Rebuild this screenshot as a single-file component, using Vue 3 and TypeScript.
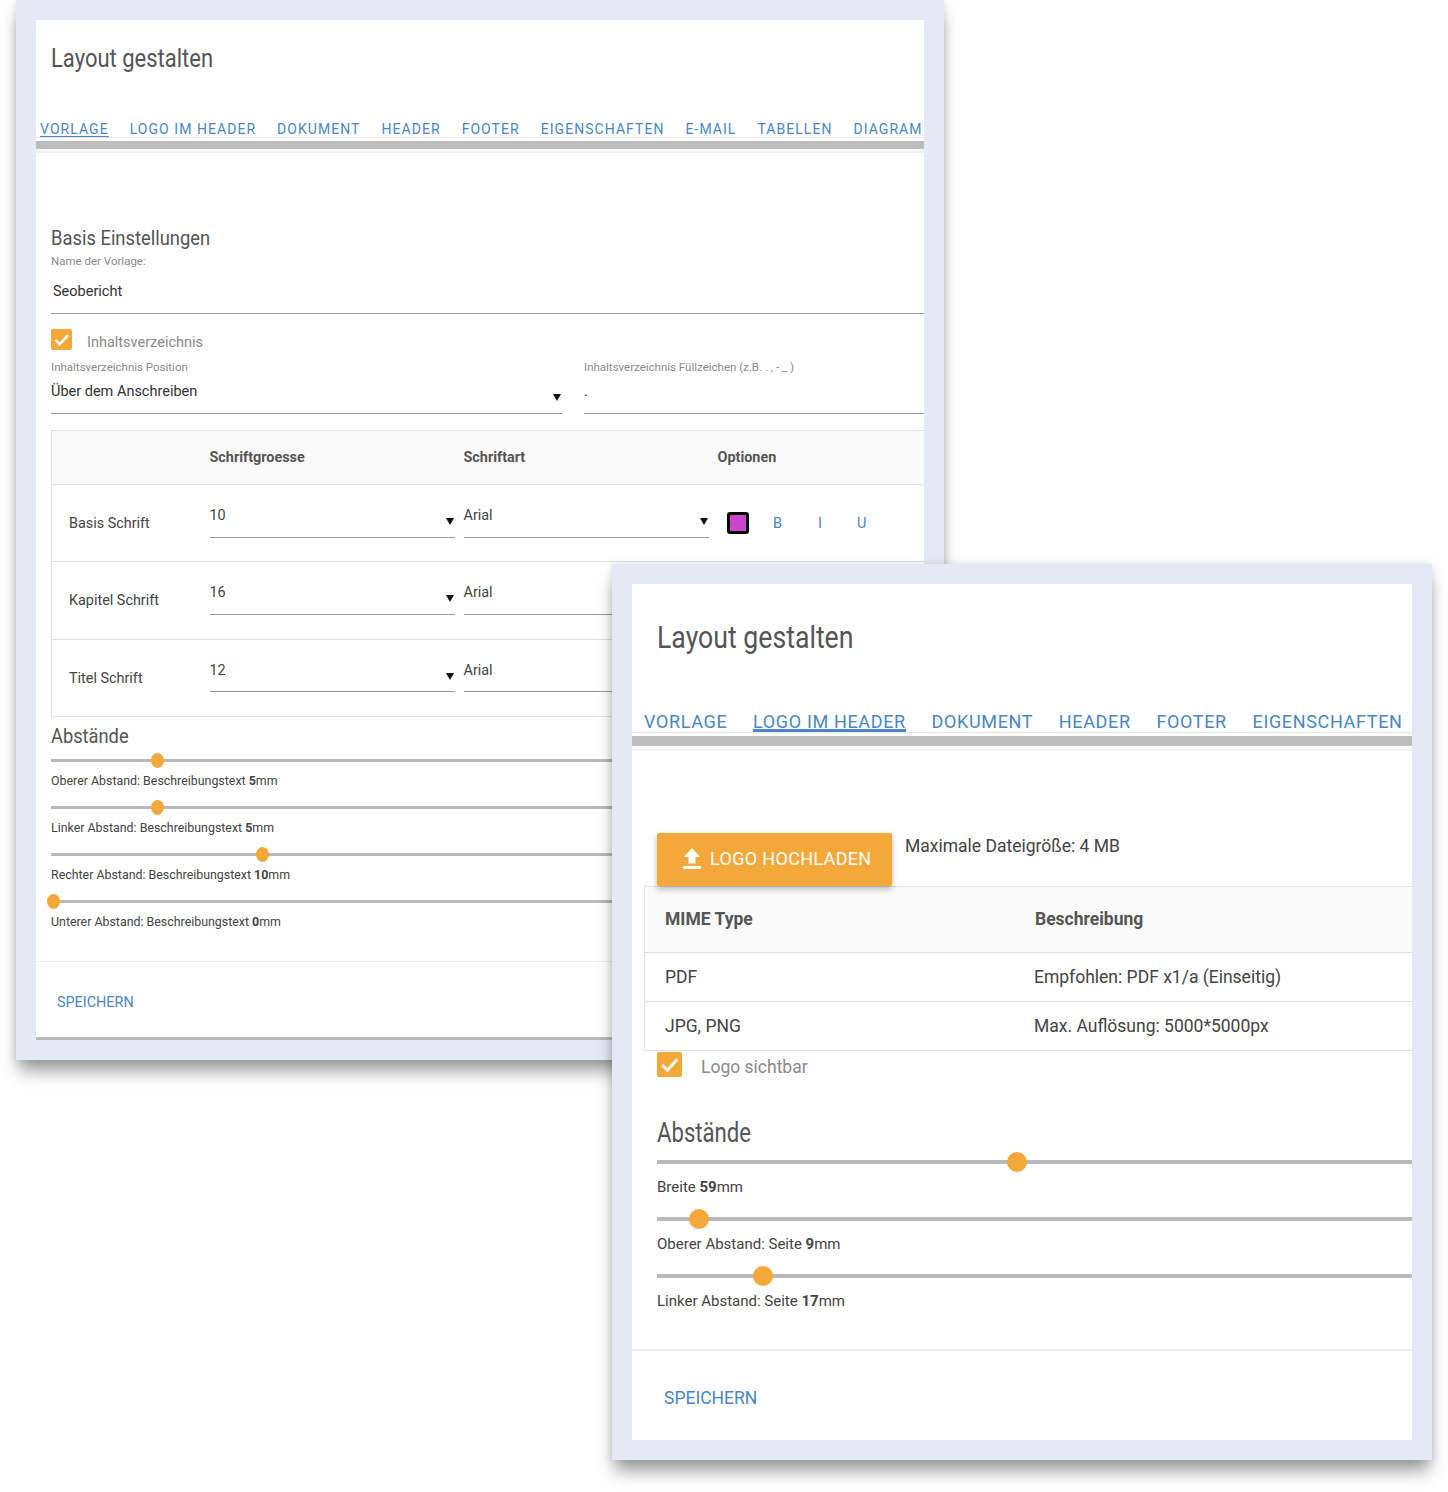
<script setup lang="ts">
interface SliderRow { text: string; value: string; unit: string; left: number }
interface FontRow { name: string; size: string; options: boolean }

const tabsA: string[] = ['VORLAGE', 'LOGO IM HEADER', 'DOKUMENT', 'HEADER', 'FOOTER', 'EIGENSCHAFTEN', 'E-MAIL', 'TABELLEN', 'DIAGRAM']
const tabsB: string[] = ['VORLAGE', 'LOGO IM HEADER', 'DOKUMENT', 'HEADER', 'FOOTER', 'EIGENSCHAFTEN']

const fontRows: FontRow[] = [
  { name: 'Basis Schrift', size: '10', options: true },
  { name: 'Kapitel Schrift', size: '16', options: false },
  { name: 'Titel Schrift', size: '12', options: false },
]

const slidersA: SliderRow[] = [
  { text: 'Oberer Abstand: Beschreibungstext ', value: '5', unit: 'mm', left: 107 },
  { text: 'Linker Abstand: Beschreibungstext ', value: '5', unit: 'mm', left: 107 },
  { text: 'Rechter Abstand: Beschreibungstext ', value: '10', unit: 'mm', left: 212 },
  { text: 'Unterer Abstand: Beschreibungstext ', value: '0', unit: 'mm', left: 3 },
]

const slidersB: SliderRow[] = [
  { text: 'Breite ', value: '59', unit: 'mm', left: 360 },
  { text: 'Oberer Abstand: Seite ', value: '9', unit: 'mm', left: 42 },
  { text: 'Linker Abstand: Seite ', value: '17', unit: 'mm', left: 106 },
]
</script>

<template>
  <div class="desk">
    <section class="window win-a">
      <div class="inner">
        <h1 class="title-a">Layout gestalten</h1>
        <nav class="tabs tabs-a">
          <span v-for="(t, i) in tabsA" :key="t" class="tab" :class="{ active: i === 0 }">{{ t }}</span>
        </nav>
        <div class="bar bar-a"></div>
        <div class="rule"></div>

        <div class="body-a">
          <h2 class="h-basis">Basis Einstellungen</h2>
          <div class="small-label first">Name der Vorlage:</div>
          <div class="field name-field">Seobericht</div>

          <div class="check-row">
            <span class="check">
              <svg viewBox="0 0 24 24" width="21" height="21"><path d="M5 12.5l5 5L19.5 7" fill="none" stroke="#fff" stroke-width="2.8" /></svg>
            </span>
            <span class="check-label">Inhaltsverzeichnis</span>
          </div>

          <div class="toc-grid">
            <div>
              <div class="small-label">Inhaltsverzeichnis Position</div>
              <div class="field select-field">
                <span>Über dem Anschreiben</span>
                <svg class="arrow" viewBox="0 0 8 7" width="8" height="7"><path d="M0 0h8L4 7z" /></svg>
              </div>
            </div>
            <div>
              <div class="small-label">Inhaltsverzeichnis Füllzeichen (z.B. . , - _ )</div>
              <div class="field select-field dot-field">.</div>
            </div>
          </div>

          <div class="font-table">
            <div class="ft-row ft-head">
              <span></span>
              <span>Schriftgroesse</span>
              <span>Schriftart</span>
              <span>Optionen</span>
            </div>
            <div v-for="r in fontRows" :key="r.name" class="ft-row ft-body">
              <span class="ft-name">{{ r.name }}</span>
              <div class="ft-select">
                <span>{{ r.size }}</span>
                <svg class="arrow" viewBox="0 0 8 7" width="8" height="7"><path d="M0 0h8L4 7z" /></svg>
              </div>
              <div class="ft-select">
                <span>Arial</span>
                <svg class="arrow" viewBox="0 0 8 7" width="8" height="7"><path d="M0 0h8L4 7z" /></svg>
              </div>
              <div class="ft-options">
                <span class="swatch"></span>
                <span class="opt opt-b">B</span>
                <span class="opt opt-i">I</span>
                <span class="opt opt-u">U</span>
              </div>
            </div>
          </div>

          <h2 class="h-abst-a">Abstände</h2>
          <div v-for="s in slidersA" :key="s.text" class="slide-a">
            <div class="track-a">
              <span class="thumb-a" :style="{ left: s.left + 'px' }"></span>
            </div>
            <div class="slide-label-a">{{ s.text }}<b>{{ s.value }}</b>{{ s.unit }}</div>
          </div>
        </div>

        <footer class="foot-a"><span class="save-a">SPEICHERN</span></footer>
      </div>
    </section>

    <section class="window win-b">
      <div class="inner">
        <h1 class="title-b">Layout gestalten</h1>
        <nav class="tabs tabs-b">
          <span v-for="(t, i) in tabsB" :key="t" class="tab" :class="{ active: i === 1 }">{{ t }}</span>
        </nav>
        <div class="bar bar-b"></div>
        <div class="rule"></div>

        <div class="body-b">
          <div class="upload-row">
            <button class="upload" type="button">
              <svg viewBox="0 0 18 21" width="18" height="21"><path d="M9 0l8 9h-4.5v6.5h-7V9H1zM0 18h18v3H0z" fill="#fff" /></svg>
              <span>LOGO HOCHLADEN</span>
            </button>
            <span class="max-size">Maximale Dateigröße: 4 MB</span>
          </div>

          <div class="mime-table">
            <div class="mt-row mt-head"><span>MIME Type</span><span>Beschreibung</span></div>
            <div class="mt-row mt-body"><span>PDF</span><span>Empfohlen: PDF x1/a (Einseitig)</span></div>
            <div class="mt-row mt-body"><span>JPG, PNG</span><span>Max. Auflösung: 5000*5000px</span></div>
          </div>

          <div class="check-row-b">
            <span class="check check-big">
              <svg viewBox="0 0 24 24" width="25" height="25"><path d="M5 12.5l5 5L19.5 7" fill="none" stroke="#fff" stroke-width="2.8" /></svg>
            </span>
            <span class="check-label-b">Logo sichtbar</span>
          </div>

          <h2 class="h-abst-b">Abstände</h2>
          <div v-for="s in slidersB" :key="s.text" class="slide-b">
            <div class="track-b">
              <span class="thumb-b" :style="{ left: s.left - 10 + 'px' }"></span>
            </div>
            <div class="slide-label-b">{{ s.text }}<b>{{ s.value }}</b>{{ s.unit }}</div>
          </div>
        </div>

        <footer class="foot-b"><span class="save-b">SPEICHERN</span></footer>
      </div>
    </section>
  </div>
</template>

<style scoped>
.desk {
  position: relative;
  width: 1448px;
  height: 1492px;
  overflow: hidden;
  background: #fff;
  font-family: Roboto, "Liberation Sans", sans-serif;
  color: #444;
}
.window {
  position: absolute;
  box-sizing: border-box;
  padding: 20px;
  background: #e6e8f5;
  box-shadow: 0 14px 16px -3px rgba(0, 0, 0, 0.38), 0 0 9px rgba(0, 0, 0, 0.13);
}
.win-a { left: 16px; top: 0; width: 928px; height: 1060px; }
.win-b { left: 612px; top: 564px; width: 820px; height: 896px; }
.inner {
  position: relative;
  display: flex;
  flex-direction: column;
  height: 100%;
  background: #fff;
  overflow: hidden;
}
h1, h2 { margin: 0; font-weight: 400; color: #555; white-space: nowrap; }

.title-a {
  margin: 24px 0 0 15px;
  font-size: 25px;
  line-height: 30px;
  transform: scaleX(0.88);
  transform-origin: left center;
}
.title-b {
  margin: 36px 0 0 25px;
  font-size: 31px;
  line-height: 36px;
  transform: scaleX(0.86);
  transform-origin: left center;
}

.tabs {
  display: flex;
  flex-shrink: 0;
  overflow: hidden;
  white-space: nowrap;
  border-bottom: 1px solid #e6e6e6;
  color: #4a86c5;
}
.tab { box-sizing: border-box; flex-shrink: 0; }
.tabs-a {
  margin-top: 44px;
  height: 19px;
  padding-left: 4px;
  gap: 21px;
  font-size: 14px;
  letter-spacing: 1.05px;
  line-height: 18px;
}
.tabs-a .tab { height: 18.5px; padding-top: 2px; }
.tabs-a .active { border-bottom: 1.5px solid #4a86c5; }
.tabs-b {
  margin-top: 54px;
  height: 22px;
  padding-left: 12px;
  gap: 25.7px;
  font-size: 18px;
  letter-spacing: 0.65px;
  line-height: 22px;
}
.tabs-b .tab { height: 22px; padding-top: 1px; }
.tabs-b .active { border-bottom: 3px solid #4a86c5; line-height: 21px; }

.bar { flex-shrink: 0; background: #bdbdbd; }
.bar-a { margin-top: 3px; height: 8px; }
.bar-b { margin-top: 3px; height: 10px; }
.rule { flex-shrink: 0; margin-top: 2px; height: 2px; background: #f0f0f0; }
.bar-b + .rule { margin-top: 3px; }

.body-a { flex: 1; padding-left: 15px; }
.h-basis { margin-top: 73px; font-size: 21px; line-height: 24px; transform: scaleX(0.875); transform-origin: left center; }
.small-label { font-size: 11.5px; line-height: 14px; color: #8a8a8a; white-space: nowrap; }
.small-label.first { margin-top: 4px; }
.field {
  box-sizing: border-box;
  border-bottom: 1px solid #9a9a9a;
  font-size: 14.5px;
  line-height: 18px;
  color: #333;
}
.name-field { padding: 15px 0 12px 2px; }
.check-row { display: flex; align-items: center; gap: 15px; margin-top: 15px; height: 21px; }
.check {
  display: flex;
  align-items: center;
  justify-content: center;
  width: 21px;
  height: 21px;
  border-radius: 2px;
  background: #f4a83a;
}
.check-label { margin-top: 5px; font-size: 14.5px; color: #8a8a8a; }
.toc-grid { display: grid; grid-template-columns: 511px 340px; gap: 22px; margin-top: 10px; }
.select-field {
  display: flex;
  justify-content: space-between;
  margin-top: 9px;
  padding-bottom: 12px;
  height: 31px;
}
.arrow { margin-top: 11px; margin-right: 1px; fill: #111; flex-shrink: 0; }
.dot-field { line-height: 18px; }

.font-table {
  margin-top: 15.5px;
  border: 1px solid #e0e0e0;
  border-right: 0;
  height: 287px;
  box-sizing: border-box;
}
.ft-row { display: grid; grid-template-columns: 157.5px 254px 254px 1fr; box-sizing: border-box; }
.ft-head {
  height: 54.5px;
  align-items: center;
  background: #fafafa;
  border-bottom: 1px solid #e0e0e0;
  font-size: 14.4px;
  font-weight: 700;
  color: #555;
}
.ft-body { height: 77.4px; border-bottom: 1px solid #e0e0e0; font-size: 14.4px; }
.ft-body:last-child { border-bottom: 0; }
.ft-name { align-self: center; padding-left: 17px; }
.ft-select {
  box-sizing: border-box;
  display: flex;
  justify-content: space-between;
  width: 245px;
  height: 52.5px;
  padding-top: 22px;
  border-bottom: 1px solid #9a9a9a;
  line-height: 18px;
  color: #444;
}
.ft-select .arrow { margin-top: 11px; margin-right: 1px; }
.ft-options { display: flex; align-items: center; padding-left: 9.5px; color: #4a86c5; }
.swatch {
  box-sizing: border-box;
  width: 22px;
  height: 22px;
  border: 3px solid #000;
  border-radius: 3px;
  background: #cc44cc;
}
.opt { font-size: 14.5px; }
.opt-b { margin-left: 24px; }
.opt-i { margin-left: 36px; }
.opt-u { margin-left: 35px; }

.h-abst-a { margin-top: 7.5px; font-size: 21px; line-height: 24px; transform: scaleX(0.87); transform-origin: left center; }
.slide-a { margin-top: 18px; }
.h-abst-a + .slide-a { margin-top: 11px; }
.track-a { position: relative; height: 3px; margin: 7px 0 6px; background: #b9b9b9; }
.thumb-a {
  position: absolute;
  top: -6px;
  width: 13px;
  height: 15px;
  margin-left: -7px;
  border-radius: 50%;
  background: #f4a83a;
}
.slide-label-a { margin-top: 12px; font-size: 12.4px; line-height: 14px; color: #444; white-space: nowrap; }
.foot-a {
  box-sizing: border-box;
  display: flex;
  align-items: center;
  height: 79px;
  padding: 6px 0 0 21px;
  border-top: 1px solid #eee;
  border-bottom: 3px solid #b9b9b9;
  flex-shrink: 0;
}
.save-a { font-size: 14.4px; color: #4a86c5; }

.body-b { flex: 1; padding-left: 25px; }
.upload-row { display: flex; align-items: flex-start; gap: 13px; margin-top: 82px; }
.upload {
  display: flex;
  align-items: center;
  gap: 9px;
  box-sizing: border-box;
  width: 235px;
  height: 53px;
  padding: 0 0 3px 26px;
  border: 0;
  border-radius: 2px;
  background: #f4a83a;
  color: #fff;
  font-family: inherit;
  font-size: 18px;
  letter-spacing: 0.33px;
  box-shadow: 0 3px 6px rgba(0, 0, 0, 0.28);
  position: relative;
  z-index: 1;
}
.max-size { font-size: 17.5px; line-height: 26px; color: #444; }
.mime-table {
  margin-left: -13px;
  border: 1px solid #e0e0e0;
  border-right: 0;
  box-sizing: border-box;
  height: 165px;
}
.mt-row { display: grid; grid-template-columns: 369px 1fr; align-items: center; box-sizing: border-box; padding-left: 20px; font-size: 17.5px; }
.mt-head { height: 66px; padding-bottom: 2px; background: #fafafa; border-bottom: 1px solid #e0e0e0; font-weight: 700; color: #555; }
.mt-head span + span { padding-left: 1px; }
.mt-body { height: 49px; border-bottom: 1px solid #e0e0e0; color: #444; }
.mt-body:last-child { border-bottom: 0; padding-bottom: 2px; }
.check-row-b { display: flex; align-items: center; gap: 19px; margin-top: 0; height: 26px; }
.check-big { width: 25px; height: 25px; }
.check-label-b { margin-top: 5px; font-size: 17.5px; color: #8a8a8a; }
.h-abst-b { margin-top: 40px; font-size: 27px; line-height: 32px; transform: scaleX(0.82); transform-origin: left center; }
.slide-b { margin-top: 20px; }
.h-abst-b + .slide-b { margin-top: 11px; }
.track-b { position: relative; height: 4px; margin: 8px 0; background: #b9b9b9; }
.thumb-b {
  position: absolute;
  top: -8px;
  width: 20px;
  height: 20px;
  border-radius: 50%;
  background: #f4a83a;
}
.slide-label-b { margin-top: 13px; font-size: 15px; line-height: 20px; color: #444; white-space: nowrap; }
.foot-b {
  box-sizing: border-box;
  display: flex;
  align-items: center;
  height: 91px;
  padding: 5px 0 0 32px;
  border-top: 2px solid #eee;
  flex-shrink: 0;
}
.save-b { font-size: 17.5px; color: #4a86c5; }
</style>

<style>
html, body { margin: 0; background: #fff; }
</style>
